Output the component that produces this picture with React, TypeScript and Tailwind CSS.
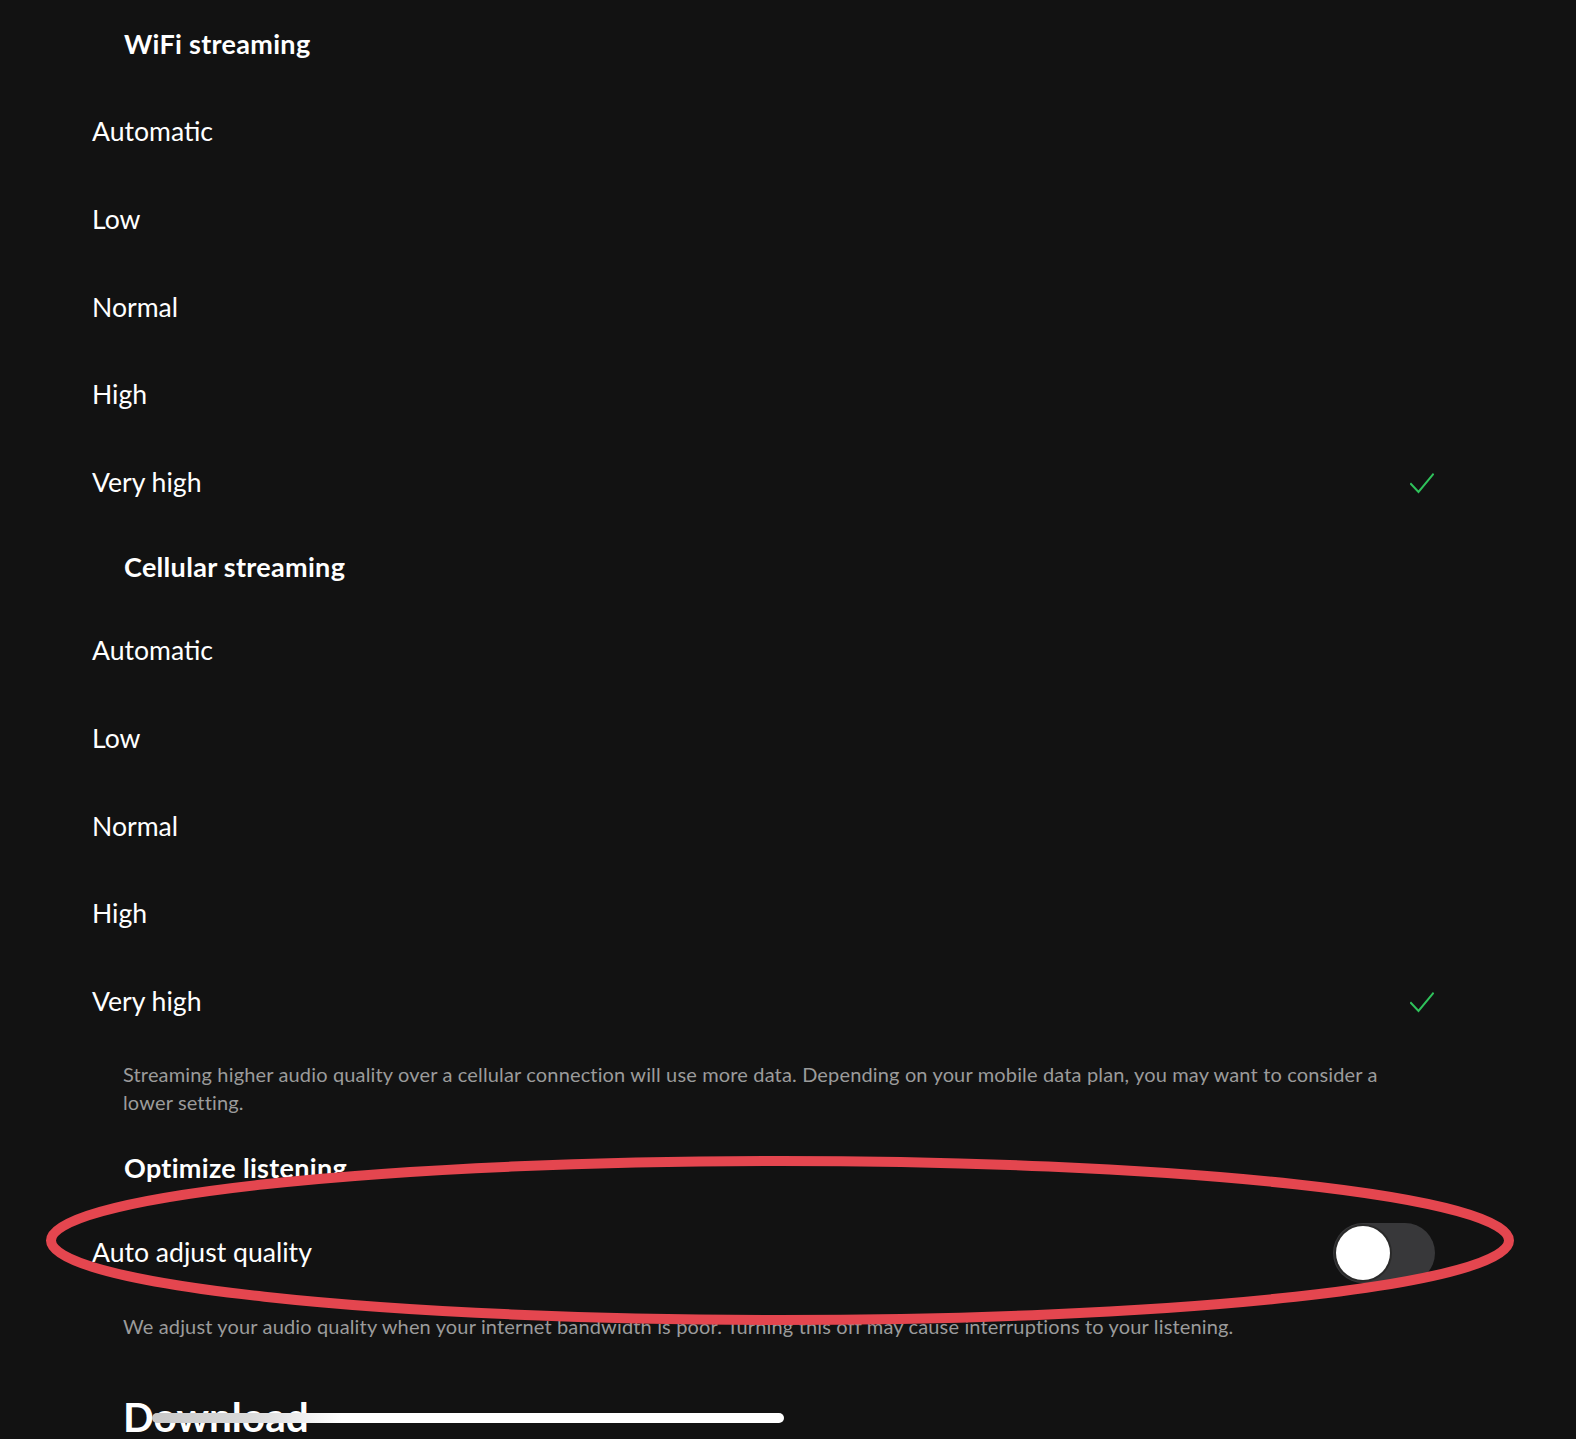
import React from "react";

const font = { fontFamily: "Lato, 'Noto Sans', sans-serif" };

function Check() {
  return (
    <svg width="24" height="21" viewBox="0 0 24 21" fill="none">
      <polyline points="1,11 8.5,19 23,1.5" stroke="#2fc25b" strokeWidth="2" strokeLinecap="square" fill="none" />
    </svg>
  );
}

function Item({ label, checked }: { label: string; checked?: boolean }) {
  return (
    <div className="flex h-[87.8px] items-center justify-between pl-[92px] pr-[142px]">
      <span className="text-[26.6px] text-white">{label}</span>
      {checked ? <Check /> : null}
    </div>
  );
}

const options = ["Automatic", "Low", "Normal", "High", "Very high"];

export default function App() {
  return (
    <div className="relative h-[1439px] w-[1576px] overflow-hidden bg-[#121212]" style={font}>
      <div className="flex h-[88px] items-center pl-[124px]">
        <h2 className="text-[27px] font-bold tracking-[0.3px] text-white">WiFi streaming</h2>
      </div>
      {options.map((o) => (
        <Item key={"w" + o} label={o} checked={o === "Very high"} />
      ))}
      <div className="flex h-[80px] items-center pl-[124px]">
        <h2 className="text-[27px] font-bold tracking-[0.3px] text-white">Cellular streaming</h2>
      </div>
      {options.map((o) => (
        <Item key={"c" + o} label={o} checked={o === "Very high"} />
      ))}
      <p className="pl-[123px] pr-[180px] pt-[14px] text-[20px] leading-[28px] tracking-[0.15px] text-[#9b9b9b]">
        Streaming higher audio quality over a cellular connection will use more data. Depending on your mobile data plan, you may want to consider a lower setting.
      </p>
      <div className="mt-[26px] flex h-[52px] items-center pl-[124px]">
        <h2 className="text-[27px] font-bold tracking-[0.3px] text-white">Optimize listening</h2>
      </div>
      <div className="flex h-[118px] items-center justify-between pl-[92px] pr-[141px]">
        <span className="text-[26.6px] text-white">Auto adjust quality</span>
        <div className="flex h-[60px] w-[102px] items-center rounded-full bg-[#38383a] p-[3px]">
          <div className="h-[54px] w-[54px] rounded-full bg-white shadow-[0_0_0_2px_#2a2a2a]" />
        </div>
      </div>
      <p className="pl-[123px] text-[20px] leading-[28px] tracking-[0.15px] text-[#9b9b9b]">
        We adjust your audio quality when your internet bandwidth is poor. Turning this off may cause interruptions to your listening.
      </p>
      <div className="mt-[53px] pl-[123px]">
        <h1 className="text-[40.5px] font-bold leading-[48px] text-white">Download</h1>
      </div>

      <svg className="pointer-events-none absolute left-0 top-0" width="1576" height="1439">
        <ellipse cx="780" cy="1240.5" rx="729" ry="79.5" fill="none" stroke="#e4464f" strokeWidth="10" />
      </svg>
      <div className="absolute left-[152px] top-[1413px] h-[10px] w-[632px] rounded-full bg-[linear-gradient(to_right,#c8c8c8_0%,#d8d8d8_15%,#ffffff_30%,#ffffff_100%)]" />
    </div>
  );
}
